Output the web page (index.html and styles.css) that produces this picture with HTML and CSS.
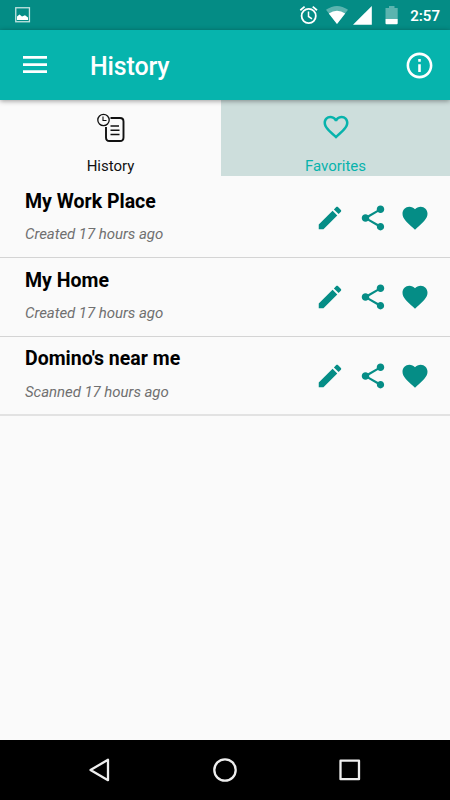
FILE: index.html
```html
<!DOCTYPE html>
<html lang="en">
<head>
<meta charset="utf-8">
<title>History</title>
<link rel="stylesheet" href="styles.css">
</head>
<body>
<svg width="0" height="0" class="defs">
  <symbol id="edit" viewBox="0 0 24 24"><path d="M3 17.25V21h3.75L17.81 9.94l-3.75-3.75L3 17.25zM20.71 7.04c.39-.39.39-1.02 0-1.41l-2.34-2.34c-.39-.39-1.02-.39-1.41 0l-1.83 1.83 3.75 3.75 1.83-1.83z"/></symbol>
  <symbol id="share" viewBox="0 0 24 24"><path d="M18 16.08c-.76 0-1.44.3-1.96.77L8.91 12.7c.05-.23.09-.46.09-.7s-.04-.47-.09-.7l7.05-4.11c.54.5 1.25.81 2.04.81 1.66 0 3-1.34 3-3s-1.34-3-3-3-3 1.34-3 3c0 .24.04.47.09.7L8.04 9.81C7.5 9.31 6.79 9 6 9c-1.66 0-3 1.34-3 3s1.34 3 3 3c.79 0 1.5-.31 2.04-.81l7.12 4.16c-.05.21-.08.43-.08.65 0 1.61 1.31 2.92 2.92 2.92s2.92-1.31 2.92-2.92-1.31-2.92-2.92-2.92z"/></symbol>
  <symbol id="heart" viewBox="0 0 24 24"><path d="M12 21.35l-1.45-1.32C5.4 15.36 2 12.28 2 8.5 2 5.42 4.42 3 7.5 3c1.74 0 3.41.81 4.5 2.09C13.09 3.81 14.76 3 16.5 3 19.58 3 22 5.42 22 8.5c0 3.78-3.4 6.86-8.55 11.54L12 21.35z"/></symbol>
</svg>
<div class="screen">
  <div class="status">
    <svg class="pic" width="16" height="16" viewBox="0 0 16 16"><rect x=".75" y=".75" width="13.7" height="14" fill="none" stroke="#c4e4e1" stroke-width="1.3"/><path d="M2 13V9.5L4.5 7.5 7 9.5 10 8.300 13 10.500V13z" fill="#fff"/></svg>
    <svg width="110" height="30" viewBox="290 0 110 30" class="indicators">
      <g fill="none" stroke="#fff" stroke-width="1.8"><circle cx="308.700" cy="16" r="7.100"/><path d="M308.500 11.500v5l3.500 2.300" stroke-width="1.500"/><path d="M300.300 10.200l4.300-3.600M317 10.200l-4.300-3.600"/></g>
      <path d="M326 9.800Q337 2.200 348 9.800L337 24z" fill="#fff" opacity=".35"/>
      <path d="M328.800 13.500Q337 8 345.200 13.500L337 24z" fill="#fff"/>
      <path d="M353 24.800L371.800 6v18.800z" fill="#fff"/>
      <path d="M385.500 8H389V6h5.500v2h3.200v11h-12.200z" fill="#fff" opacity=".35"/>
      <path d="M385.500 19h12.200v4.200q0 1-1 1h-10.200q-1 0-1-1z" fill="#fff"/>
    </svg>
    <span class="time">2:57</span>
  </div>
  <div class="appbar">
    <svg class="menu" width="24" height="18" viewBox="0 0 24 18"><path d="M0 0h24v2.800H0zM0 7.200h24V10H0zM0 14.200h24V17H0z" fill="#fff"/></svg>
    <h1>History</h1>
    <svg class="info" width="31" height="31" viewBox="0 0 24 24" fill="#fff"><path d="M11 17h2v-6h-2v6zm1-15C6.480 2 2 6.480 2 12s4.480 10 10 10 10-4.480 10-10S17.520 2 12 2zm0 18c-4.410 0-8-3.590-8-8s3.590-8 8-8 8 3.590 8 8-3.590 8-8 8zM11 9h2V7h-2v2z"/></svg>
  </div>
  <div class="tabs">
    <div class="tab active">
      <svg width="30" height="30" viewBox="96 112 30 30" fill="none" stroke="#111">
        <path d="M110.500 118H120q3.500 0 3.500 3.500v16q0 3.500-3.500 3.500h-10.500q-3.500 0-3.500-3.500V127" stroke-width="1.900"/>
        <circle cx="103.500" cy="120" r="5.700" stroke-width="1.300"/><path d="M103 116.500v4h3.500" stroke-width="1.100"/>
        <path d="M110.500 126h8.500M110.500 130.300h9M110.500 134.500h9" stroke-width="1.600"/>
      </svg>
      <span>History</span>
    </div>
    <div class="tab fav">
      <svg width="30" height="30" viewBox="0 0 24 24" fill="#07b3ac"><path d="M16.500 3c-1.740 0-3.410.81-4.500 2.090C10.910 3.810 9.240 3 7.500 3 4.420 3 2 5.420 2 8.500c0 3.780 3.400 6.860 8.550 11.540L12 21.350l1.450-1.320C18.600 15.360 22 12.280 22 8.500 22 5.420 19.580 3 16.500 3zm-4.400 15.550l-.1.100-.1-.1C7.140 14.240 4 11.390 4 8.500 4 6.500 5.500 5 7.500 5c1.540 0 3.040.99 3.570 2.360h1.870C13.460 5.990 14.960 5 16.500 5c2 0 3.500 1.500 3.500 3.500 0 2.890-3.140 5.740-7.900 10.050z"/></svg>
      <span>Favorites</span>
    </div>
  </div>
  <div class="list">
    <div class="row">
      <div class="text"><h2>My Work Place</h2><p>Created 17 hours ago</p></div>
      <div class="actions"><svg><use href="#edit"/></svg><svg><use href="#share"/></svg><svg><use href="#heart"/></svg></div>
    </div>
    <div class="row">
      <div class="text"><h2>My Home</h2><p>Created 17 hours ago</p></div>
      <div class="actions"><svg><use href="#edit"/></svg><svg><use href="#share"/></svg><svg><use href="#heart"/></svg></div>
    </div>
    <div class="row">
      <div class="text"><h2>Domino's near me</h2><p>Scanned 17 hours ago</p></div>
      <div class="actions"><svg><use href="#edit"/></svg><svg><use href="#share"/></svg><svg><use href="#heart"/></svg></div>
    </div>
  </div>
  <div class="navbar">
    <svg width="24" height="26" viewBox="0 0 24 26"><path d="M2.500 13L20 2.800v20.400z"/></svg>
    <svg width="26" height="26" viewBox="0 0 26 26"><circle cx="13" cy="13" r="10.700"/></svg>
    <svg width="24" height="26" viewBox="0 0 24 26"><rect x="2.500" y="3.700" width="18.500" height="18.500"/></svg>
  </div>
</div>
</body>
</html>
```
FILE: styles.css
```css
* { box-sizing: border-box; }
body { margin: 0; font-family: Roboto, sans-serif; background: #fafafa; }
h1, h2, p { margin: 0; }
svg { display: block; flex: none; }
.defs { display: none; }
.screen { width: 450px; height: 800px; display: flex; flex-direction: column; overflow: hidden; }

.status { height: 30px; background: #048c85; display: flex; align-items: center; padding: 0 10px 0 15px; flex: none; }
.indicators { margin-left: auto; }
.time { width: 40px; text-align: right; color: #fff; font-size: 15px; font-weight: 600; line-height: 30px; padding-top: 1px; }

.appbar { height: 70px; background: #06b4ad; display: flex; align-items: center; padding: 0 15px 0 23px; flex: none; position: relative; box-shadow: 0 1px 5px rgba(0, 0, 0, .4); }
.appbar h1 { margin-left: 43px; padding-top: 4px; font-size: 25px; letter-spacing: -.15px; font-weight: 500; line-height: 30px; color: #fff; }
.info { margin-left: auto; }

.tabs { height: 76px; display: flex; flex: none; }
.tab { display: flex; flex-direction: column; align-items: center; padding-top: 12px; font-size: 15px; line-height: 18px; }
.tab span { margin-top: 15px; }
.active { width: 221px; color: #111; }
.fav { width: 229px; background: #cddedc; color: #07b3ac; }

.list { flex: 1; padding-top: 3px; }
.row { height: 79px; border-bottom: 1px solid #d4d4d4; display: flex; justify-content: space-between; padding: 11px 20px 0 25px; }
.row:last-child { height: 79px; border-bottom: 2px solid #e2e2e2; padding-top: 10px; }
.row h2 { font-size: 19.500px; line-height: 24px; font-weight: 700; color: #000; }
.row p { margin-top: 11px; font-size: 15px; letter-spacing: -.05px; line-height: 18px; font-style: italic; color: #707070; }
.row:last-child p { margin-top: 12px; }
.actions { display: flex; gap: 12.500px; padding-top: 13px; }
.row:last-child .actions { padding-top: 13.500px; }
.actions svg { width: 30px; height: 30px; fill: #058d86; }

.navbar { height: 60px; background: #000; display: flex; align-items: center; justify-content: space-between; padding: 0 88px; flex: none; }
.navbar svg { fill: none; stroke: #eee; stroke-width: 2.300; stroke-linejoin: round; }
```
